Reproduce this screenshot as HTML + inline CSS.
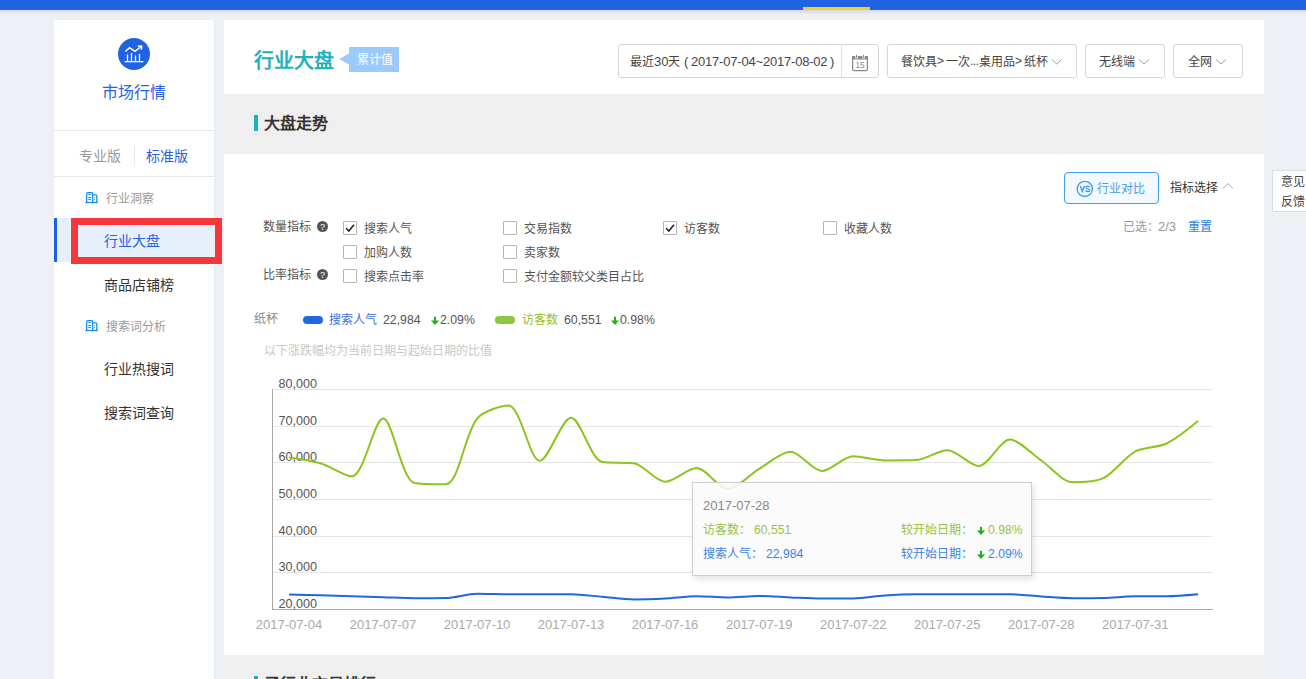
<!DOCTYPE html>
<html lang="zh-CN">
<head>
<meta charset="utf-8">
<style>
*{margin:0;padding:0;box-sizing:border-box;}
html,body{width:1306px;height:679px;overflow:hidden;}
body{background:#edf0f4;font-family:"Liberation Sans",sans-serif;color:#333;position:relative;}
.a{position:absolute;white-space:nowrap;}
.t12{font-size:12px;line-height:12px;}
.t13{font-size:13px;line-height:13px;}
.t14{font-size:14px;line-height:14px;}
.t16{font-size:16px;line-height:16px;}
#topbar{left:0;top:0;width:1306px;height:10px;background:#1f63e1;}
#topsh{left:0;top:10px;width:1306px;height:5px;background:linear-gradient(#d6d8dc,#edf0f4);}
#yel{left:803px;top:7px;width:67px;height:3px;background:#f7cf1d;}
#side{left:54px;top:20px;width:160px;height:659px;background:#fff;box-shadow:1px 0 1px rgba(0,0,0,0.03);}
#main{left:224px;top:20px;width:1040px;height:659px;background:#fff;}
.band{background:#efefef;}
.hr{background:#e8e8e8;height:1px;}
.blue{color:#2a5fe6;}
.gray{color:#999;}
.chk{width:14px;height:14px;border:1px solid #b4b4b4;background:#fff;border-radius:1px;}
.sel{height:34px;border:1px solid #d6d6d6;border-radius:3px;background:#fff;}
</style>
</head>
<body>
<div class="a" id="topbar"></div>
<div class="a" id="topsh"></div>
<div class="a" id="yel"></div>

<!-- sidebar -->
<div class="a" id="side"></div>
<svg class="a" style="left:118px;top:38px" width="32" height="32" viewBox="0 0 32 32">
  <circle cx="16" cy="16" r="16" fill="#2062e0"/>
  <path d="M6.5 23.7H25.5" stroke="#fff" stroke-width="1.2" fill="none"/>
  <path d="M9.5 16.5V23.5M13.5 15V23.5M17.5 17.5V23.5M21.5 16V23.5" stroke="#fff" stroke-width="1.3" fill="none"/>
  <path d="M7.3 13.5L11.5 9.7L17 13.3L22.6 9" stroke="#fff" stroke-width="1.5" fill="none"/>
  <path d="M19.8 8.2L23.6 8L23.4 11.8" stroke="#fff" stroke-width="1.5" fill="none"/>
</svg>
<div class="a t16 blue" style="left:102px;top:85px">市场行情</div>
<div class="a hr" style="left:54px;top:130px;width:160px"></div>
<div class="a t14 gray" style="left:79px;top:149px">专业版</div>
<div class="a" style="left:134px;top:146px;width:1px;height:19px;background:#e6e6e6"></div>
<div class="a t14 blue" style="left:146px;top:149px">标准版</div>
<div class="a hr" style="left:54px;top:176px;width:160px"></div>

<svg class="a" style="left:85px;top:191px" width="13" height="13" viewBox="0 0 13 13">
  <path d="M1.7 11.5V2.7Q1.7 1.7 2.7 1.7H6.7Q7.7 1.7 7.7 2.7V11.5M7.7 3.8H10.8Q11.8 3.8 11.8 4.8V11.5" stroke="#0f8ef4" stroke-width="1.25" fill="none"/>
  <path d="M0.3 11.5H12.8" stroke="#0f8ef4" stroke-width="1.3"/>
  <path d="M3.2 3.4H6.1M3.2 6.5H6.1M3.2 8.6H6.1M9.2 6.5H10.2M9.2 8.6H10.2" stroke="#0f8ef4" stroke-width="0.95"/>
</svg>
<div class="a t12 gray" style="left:106px;top:193px">行业洞察</div>

<div class="a" style="left:54px;top:218px;width:160px;height:44px;background:#e6effc"></div>
<div class="a" style="left:54px;top:218px;width:3px;height:44px;background:#1d5fe0"></div>
<div class="a t14 blue" style="left:104px;top:234px">行业大盘</div>
<div class="a" style="left:71px;top:218px;width:151px;height:46px;border:7px solid #f5373a"></div>

<div class="a t14" style="left:104px;top:278px;color:#333">商品店铺榜</div>

<svg class="a" style="left:85px;top:319px" width="13" height="13" viewBox="0 0 13 13">
  <path d="M1.7 11.5V2.7Q1.7 1.7 2.7 1.7H6.7Q7.7 1.7 7.7 2.7V11.5M7.7 3.8H10.8Q11.8 3.8 11.8 4.8V11.5" stroke="#0f8ef4" stroke-width="1.25" fill="none"/>
  <path d="M0.3 11.5H12.8" stroke="#0f8ef4" stroke-width="1.3"/>
  <path d="M3.2 3.4H6.1M3.2 6.5H6.1M3.2 8.6H6.1M9.2 6.5H10.2M9.2 8.6H10.2" stroke="#0f8ef4" stroke-width="0.95"/>
</svg>
<div class="a t12 gray" style="left:106px;top:321px">搜索词分析</div>
<div class="a t14" style="left:104px;top:362px;color:#333">行业热搜词</div>
<div class="a t14" style="left:104px;top:406px;color:#333">搜索词查询</div>

<!-- main -->
<div class="a" id="main"></div>
<div class="a band" style="left:224px;top:94px;width:1040px;height:60px"></div>
<div class="a band" style="left:224px;top:655px;width:1040px;height:24px"></div>

<div class="a" style="left:254px;top:51px;font-size:20px;line-height:20px;font-weight:bold;color:#1fb1bb">行业大盘</div>
<svg class="a" style="left:339px;top:47px" width="60" height="25" viewBox="0 0 60 25">
  <path d="M0.3 12L10 6.6V17.4Z" fill="#9ccafc"/>
  <rect x="10" y="0" width="50" height="25" fill="#9ccafc"/>
</svg>
<div class="a t12" style="left:357px;top:54px;color:#fff">累计值</div>

<div class="a sel" style="left:618px;top:44px;width:261px"></div>
<div class="a" style="left:841px;top:45px;width:1px;height:32px;background:#e0e0e0"></div>
<div class="a t12" style="left:630px;top:56px;color:#444">最近</div>
<div class="a t13" style="left:654px;top:55px;color:#444">30</div>
<div class="a t12" style="left:668px;top:56px;color:#444">天</div>
<div class="a t13" style="left:684px;top:55px;color:#444">(</div>
<div class="a t13" style="left:691px;top:55px;color:#444;letter-spacing:-0.2px">2017-07-04~2017-08-02</div>
<div class="a t13" style="left:830px;top:55px;color:#444">)</div>
<svg class="a" style="left:851px;top:54px" width="18" height="18" viewBox="0 0 18 18">
  <rect x="1.6" y="2.6" width="14.8" height="14" rx="1.6" fill="none" stroke="#8a8a8a" stroke-width="1.2"/>
  <rect x="1" y="2" width="16" height="3.6" rx="1" fill="#8a8a8a"/>
  <rect x="4.3" y="1.5" width="2.4" height="3" fill="#fff"/>
  <rect x="11.4" y="1.5" width="2.4" height="3" fill="#fff"/>
  <path d="M5.5 0.8V3.8M12.6 0.8V3.8" stroke="#8a8a8a" stroke-width="1"/>
  <text x="9" y="13.9" font-size="8.2" text-anchor="middle" fill="#8a8a8a" font-family="Liberation Sans">15</text>
</svg>

<div class="a sel" style="left:887px;top:44px;width:190px"></div>
<div class="a t12" style="left:901px;top:56px;color:#444">餐饮具</div>
<div class="a t12" style="left:937px;top:55px;color:#444">&gt;</div>
<div class="a t12" style="left:946px;top:56px;color:#444">一次</div>
<div class="a t12" style="left:970px;top:55px;color:#444;letter-spacing:-0.5px">...</div>
<div class="a t12" style="left:979px;top:56px;color:#444">桌用品</div>
<div class="a t12" style="left:1015px;top:55px;color:#444">&gt;</div>
<div class="a t12" style="left:1024px;top:56px;color:#444">纸杯</div>
<div class="a sel" style="left:1085px;top:44px;width:80px"></div>
<div class="a t12" style="left:1099px;top:56px;color:#444">无线端</div>
<div class="a sel" style="left:1173px;top:44px;width:70px"></div>
<div class="a t12" style="left:1188px;top:56px;color:#444">全网</div>
<svg class="a" style="left:0;top:0" width="1306" height="100">
  <path d="M1052 59.5L1056.8 64L1061.6 59.5M1139 59.5L1144 64L1149 59.5M1216 59.5L1221 64L1226 59.5" stroke="#a0a0a0" stroke-width="1" fill="none"/>
</svg>

<div class="a" style="left:254px;top:115px;width:4px;height:16px;background:#1fb1bb"></div>
<div class="a t16" style="left:264px;top:116px;font-weight:bold;color:#333">大盘走势</div>

<div class="a" style="left:254px;top:676px;width:4px;height:16px;background:#1fb1bb"></div>
<div class="a t16" style="left:264px;top:677px;font-weight:bold;color:#333">子行业交易排行</div>

<!-- compare btn -->
<div class="a" style="left:1064px;top:172px;width:95px;height:32px;border:1px solid #3e9bef;border-radius:4px;background:#f3faff"></div>
<svg class="a" style="left:1076px;top:180px" width="18" height="18" viewBox="0 0 18 18">
  <circle cx="8.8" cy="8.9" r="7.6" fill="none" stroke="#3e9bef" stroke-width="1.3"/>
  <path d="M4.3 6.1L6.3 11.6L8.3 6.1" stroke="#3e9bef" stroke-width="1.35" fill="none"/>
  <path d="M13.5 7.1C13 6.4 12.3 6.1 11.6 6.1C10.6 6.1 9.9 6.7 9.9 7.5C9.9 9.3 13.7 8.5 13.7 10.2C13.7 11 13 11.6 11.8 11.6C10.9 11.6 10.1 11.2 9.6 10.5" stroke="#3e9bef" stroke-width="1.3" fill="none"/>
</svg>
<div class="a t12" style="left:1097px;top:183px;color:#4a9be8">行业对比</div>
<div class="a t12" style="left:1170px;top:182px;color:#333">指标选择</div>
<svg class="a" style="left:1222px;top:181px" width="12" height="10" viewBox="0 0 12 10">
  <path d="M1 7.5L6 2.5L11 7.5" stroke="#aaa" stroke-width="1" fill="none"/>
</svg>
<div class="a t12" style="left:1123px;top:221px;color:#999">已选：</div><div class="a t13" style="left:1158px;top:220px;color:#999">2/3</div>
<div class="a t12" style="left:1188px;top:221px;color:#2b7de0">重置</div>

<!-- feedback -->
<div class="a" style="left:1272px;top:170px;width:40px;height:42px;border:1px solid #ddd;background:#fff"></div>
<div class="a t12" style="left:1281px;top:172px;line-height:20px;color:#444">意见<br>反馈</div>

<!-- checkboxes -->
<div class="a t12" style="left:263px;top:221px;color:#555">数量指标</div>
<div class="a t12" style="left:263px;top:269px;color:#555">比率指标</div>
<svg class="a" style="left:317px;top:221px" width="11" height="11" viewBox="0 0 11 11"><circle cx="5.5" cy="5.5" r="5.5" fill="#555"/><text x="5.6" y="8.9" font-size="9" text-anchor="middle" fill="#fff" font-family="Liberation Sans">?</text></svg>
<svg class="a" style="left:317px;top:269px" width="11" height="11" viewBox="0 0 11 11"><circle cx="5.5" cy="5.5" r="5.5" fill="#555"/><text x="5.6" y="8.9" font-size="9" text-anchor="middle" fill="#fff" font-family="Liberation Sans">?</text></svg>

<div class="a chk" style="left:343px;top:221px"></div>
<svg class="a" style="left:343px;top:221px" width="14" height="14" viewBox="0 0 14 14"><path d="M3 7.2L5.8 10L11 3.8" stroke="#222" stroke-width="1.6" fill="none"/></svg>
<div class="a t12" style="left:364px;top:223px;color:#555">搜索人气</div>
<div class="a chk" style="left:503px;top:221px"></div>
<div class="a t12" style="left:524px;top:223px;color:#555">交易指数</div>
<div class="a chk" style="left:663px;top:221px"></div>
<svg class="a" style="left:663px;top:221px" width="14" height="14" viewBox="0 0 14 14"><path d="M3 7.2L5.8 10L11 3.8" stroke="#222" stroke-width="1.6" fill="none"/></svg>
<div class="a t12" style="left:684px;top:223px;color:#555">访客数</div>
<div class="a chk" style="left:823px;top:221px"></div>
<div class="a t12" style="left:844px;top:223px;color:#555">收藏人数</div>
<div class="a chk" style="left:343px;top:245px"></div>
<div class="a t12" style="left:364px;top:247px;color:#555">加购人数</div>
<div class="a chk" style="left:503px;top:245px"></div>
<div class="a t12" style="left:524px;top:247px;color:#555">卖家数</div>
<div class="a chk" style="left:343px;top:269px"></div>
<div class="a t12" style="left:364px;top:271px;color:#555">搜索点击率</div>
<div class="a chk" style="left:503px;top:269px"></div>
<div class="a t12" style="left:524px;top:271px;color:#555">支付金额较父类目占比</div>

<!-- legend -->
<div class="a t12" style="left:254px;top:313px;color:#888">纸杯</div>
<div class="a" style="left:303px;top:316px;width:20px;height:8px;border-radius:4px;background:#2267de"></div>
<div class="a t12" style="left:329px;top:314px;color:#3a6fe0">搜索人气</div>
<div class="a t13" style="left:383px;top:314px;color:#555;font-size:12.3px">22,984</div>
<svg class="a" style="left:430px;top:316px" width="10" height="10" viewBox="0 0 10 10"><path d="M4 0.8H6V5H4Z M0.9 4.6H9.1L5 9Z" fill="#1cb41c"/></svg>
<div class="a t13" style="left:440px;top:314px;color:#555;font-size:12.3px">2.09%</div>
<div class="a" style="left:495px;top:316px;width:20px;height:8px;border-radius:4px;background:#8dc63f"></div>
<div class="a t12" style="left:522px;top:314px;color:#8dc21f">访客数</div>
<div class="a t13" style="left:564px;top:314px;color:#555;font-size:12.3px">60,551</div>
<svg class="a" style="left:610px;top:316px" width="10" height="10" viewBox="0 0 10 10"><path d="M4 0.8H6V5H4Z M0.9 4.6H9.1L5 9Z" fill="#1cb41c"/></svg>
<div class="a t13" style="left:620px;top:314px;color:#555;font-size:12.3px">0.98%</div>
<div class="a t12" style="left:264px;top:345px;color:#c8c8c8">以下涨跌幅均为当前日期与起始日期的比值</div>

<!-- chart -->
<svg class="a" style="left:0;top:0" width="1306" height="679">
  <g stroke="#e6e6e6" stroke-width="1">
    <path d="M272 389.5H1213M272 426.5H1213M272 462.5H1213M272 499.5H1213M272 536.5H1213M272 572.5H1213"/>
  </g>
  <path d="M272.5 389V609.5M272 609.5H1213" stroke="#a8a8a8" stroke-width="1" fill="none"/>
  <g font-family="Liberation Sans" font-size="12.6" fill="#555">
    <text x="278.5" y="388">80,000</text>
    <text x="278.5" y="424.5">70,000</text>
    <text x="278.5" y="461">60,000</text>
    <text x="278.5" y="498">50,000</text>
    <text x="278.5" y="534.5">40,000</text>
    <text x="278.5" y="571">30,000</text>
    <text x="278.5" y="607.5">20,000</text>
  </g>
  <g font-family="Liberation Sans" font-size="13" fill="#aaa" text-anchor="middle">
    <text x="289.0" y="629">2017-07-04</text>
    <text x="383.0" y="629">2017-07-07</text>
    <text x="477.1" y="629">2017-07-10</text>
    <text x="571.1" y="629">2017-07-13</text>
    <text x="665.1" y="629">2017-07-16</text>
    <text x="759.2" y="629">2017-07-19</text>
    <text x="853.2" y="629">2017-07-22</text>
    <text x="947.2" y="629">2017-07-25</text>
    <text x="1041.3" y="629">2017-07-28</text>
    <text x="1135.3" y="629">2017-07-31</text>
  </g>
  <path d="M289.00 457.40 C289.00 457.40 311.23 460.55 320.34 463.30 C330.04 466.22 345.28 476.30 351.69 476.30 C364.09 476.30 374.04 418.60 383.03 418.60 C392.85 418.60 401.30 480.03 414.38 483.00 C420.11 484.30 440.06 484.30 445.72 484.30 C458.87 484.30 464.25 434.72 477.07 418.60 C483.05 411.08 501.86 405.50 508.41 405.50 C520.67 405.50 529.52 460.80 539.76 460.80 C548.33 460.80 561.79 417.80 571.10 417.80 C580.60 417.80 590.53 460.02 602.45 462.10 C609.34 463.30 625.09 462.10 633.79 463.30 C643.89 464.69 655.45 481.80 665.14 481.80 C674.26 481.80 687.53 468.00 696.48 468.00 C706.34 468.00 718.36 489.00 727.83 489.00 C737.17 489.00 749.58 474.61 759.17 468.90 C768.38 463.42 781.25 451.70 790.52 451.70 C800.06 451.70 812.18 471.00 821.86 471.00 C830.98 471.00 843.37 456.20 853.21 456.20 C862.18 456.20 875.11 460.40 884.55 460.40 C893.91 460.40 906.72 460.40 915.90 460.10 C925.52 459.79 938.15 450.20 947.24 450.20 C956.95 450.20 969.91 466.00 978.59 466.00 C988.72 466.00 1000.13 439.60 1009.93 439.60 C1018.94 439.60 1031.93 454.15 1041.28 460.50 C1050.74 466.93 1062.35 482.20 1072.62 482.20 C1081.15 482.20 1095.77 481.83 1103.97 477.80 C1114.58 472.59 1124.80 457.15 1135.31 451.40 C1143.60 446.86 1158.07 447.65 1166.66 443.50 C1176.88 438.56 1198.00 421.10 1198.00 421.10" stroke="#8cc520" stroke-width="2" fill="none"/>
  <path d="M289.00 594.50 C289.00 594.50 310.94 595.03 320.34 595.30 C329.75 595.57 342.29 596.01 351.69 596.30 C361.09 596.58 373.63 596.92 383.03 597.20 C392.44 597.49 404.97 598.20 414.38 598.20 C423.78 598.20 436.36 598.20 445.72 598.00 C455.17 597.80 467.62 593.80 477.07 593.80 C486.43 593.80 499.01 594.30 508.41 594.30 C517.82 594.30 530.36 594.30 539.76 594.30 C549.16 594.30 561.71 594.30 571.10 594.30 C580.52 594.30 593.05 596.04 602.45 596.80 C611.85 597.57 624.38 599.40 633.79 599.40 C643.18 599.40 655.74 598.96 665.14 598.50 C674.55 598.03 687.07 596.30 696.48 596.30 C705.88 596.30 718.43 597.40 727.83 597.40 C737.23 597.40 749.77 596.00 759.17 596.00 C768.58 596.00 781.11 597.02 790.52 597.40 C799.92 597.77 812.46 598.50 821.86 598.50 C831.26 598.50 843.82 598.50 853.21 598.50 C862.63 598.50 875.13 596.13 884.55 595.50 C893.94 594.87 906.49 594.30 915.90 594.30 C925.30 594.30 937.84 594.30 947.24 594.30 C956.64 594.30 969.18 594.30 978.59 594.30 C987.99 594.30 1000.54 594.30 1009.93 594.30 C1019.35 594.30 1031.87 595.91 1041.28 596.50 C1050.67 597.08 1063.21 598.20 1072.62 598.20 C1082.02 598.20 1094.57 598.20 1103.97 598.00 C1113.38 597.80 1125.90 596.30 1135.31 596.30 C1144.71 596.30 1157.26 596.30 1166.66 596.30 C1176.07 596.30 1198.00 594.30 1198.00 594.30" stroke="#1f67df" stroke-width="2" fill="none"/>
</svg>

<!-- tooltip -->
<div class="a" style="left:692px;top:482px;width:340px;height:94px;border:1px solid #cfcfcf;background:rgba(251,251,251,0.88);box-shadow:2px 3px 6px rgba(0,0,0,0.12)"></div>
<div class="a t13" style="left:703px;top:499px;color:#888">2017-07-28</div>
<div class="a t12" style="left:703px;top:524px;color:#97c43e">访客数：</div>
<div class="a t13" style="left:754px;top:523.5px;color:#97c43e;font-size:12.2px">60,551</div>
<div class="a t12" style="left:703px;top:548px;color:#3a84e3">搜索人气：</div>
<div class="a t13" style="left:766px;top:547.5px;color:#3a84e3;font-size:12.2px">22,984</div>
<div class="a t12" style="left:901px;top:524px;color:#97c43e">较开始日期：</div>
<svg class="a" style="left:976px;top:526px" width="10" height="10" viewBox="0 0 10 10"><path d="M4 0.8H6V5H4Z M0.9 4.6H9.1L5 9Z" fill="#1cb41c"/></svg>
<div class="a t13" style="left:988px;top:523.5px;color:#97c43e;font-size:12.2px">0.98%</div>
<div class="a t12" style="left:901px;top:548px;color:#3a84e3">较开始日期：</div>
<svg class="a" style="left:976px;top:550px" width="10" height="10" viewBox="0 0 10 10"><path d="M4 0.8H6V5H4Z M0.9 4.6H9.1L5 9Z" fill="#1cb41c"/></svg>
<div class="a t13" style="left:988px;top:547.5px;color:#3a84e3;font-size:12.2px">2.09%</div>
</body>
</html>
